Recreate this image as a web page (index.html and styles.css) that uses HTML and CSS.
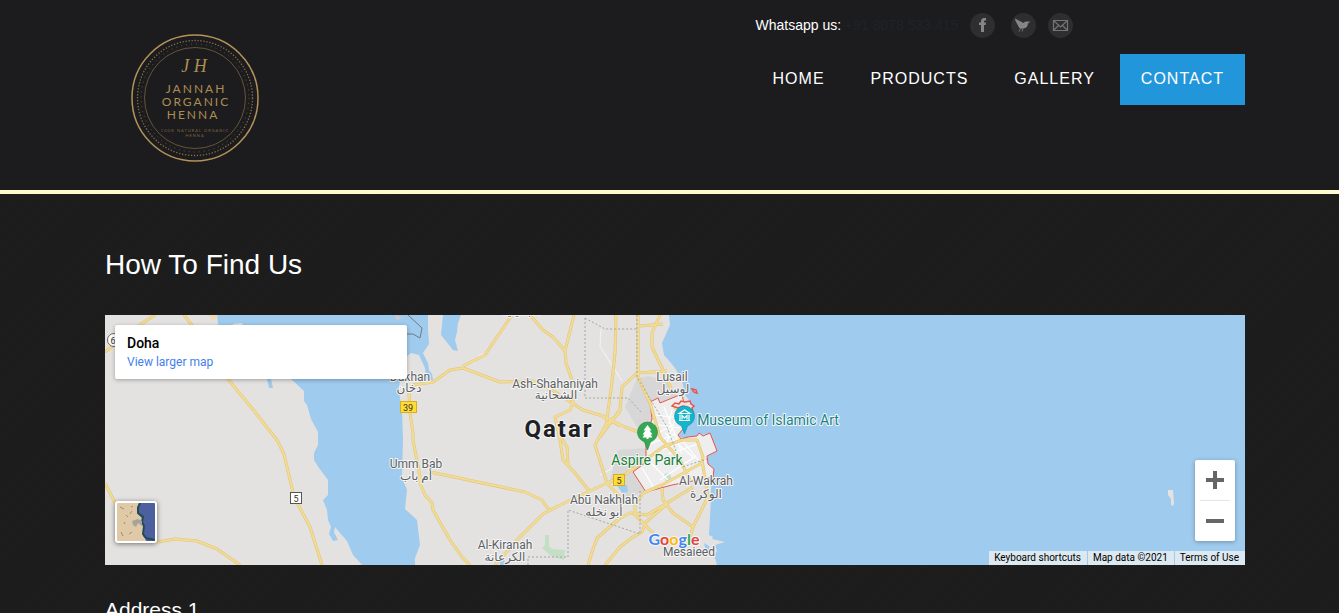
FILE: index.html
```html
<!DOCTYPE html>
<html lang="en">
<head>
<meta charset="utf-8">
<meta name="viewport" content="width=device-width, initial-scale=1">
<title>Contact - Jannah Organic Henna</title>
<link rel="stylesheet" href="styles.css">
</head>
<body>
<header class="site-header">
  <div class="container header-row">
    <a class="logo" href="#" aria-label="Jannah Organic Henna">
      <svg viewBox="0 0 130 130" width="130" height="130">
        <g fill="none" stroke="#a98b54">
          <circle cx="65" cy="65" r="63" stroke-width="1.5" stroke="#b3935a"/>
          <circle cx="65" cy="65" r="57.5" stroke-width="1.3" stroke-dasharray="1.3 1.7" opacity=".75"/>
          <circle cx="65" cy="65" r="54" stroke-width="1" stroke-dasharray="1 4" opacity=".5"/>
          <circle cx="65" cy="65" r="50.5" stroke-width="1" opacity=".5"/>
        </g>
        <g class="logo-text">
          <text class="logo-mono" x="64" y="39">J H</text>
          <text class="logo-name" x="66" y="60">JANNAH</text>
          <text class="logo-name" x="66" y="73">ORGANIC</text>
          <text class="logo-name" x="63" y="86">HENNA</text>
          <text class="logo-tag" x="65" y="99">100% NATURAL ORGANIC</text>
          <text class="logo-tag" x="65" y="104">HENNA</text>
        </g>
      </svg>
    </a>
    <div class="header-side">
      <div class="topline">
        <span>Whatsapp us: <a class="phone" href="#">+91 8078 533 415</a></span>
        <a class="social" href="#" aria-label="Facebook"><svg viewBox="0 0 25 25"><circle cx="12.500" cy="12.500" r="12.500" fill="#2e2e30"/><path d="M11 19v-7H9v-2.500h2V8.500Q11 5 14 5h2v2.500h-1.200Q14 7.500 14 8.500v1h2L15.600 12H14v7z" fill="#858587"/></svg></a>
        <a class="social social-wide" href="#" aria-label="Twitter"><svg viewBox="0 0 25 25"><circle cx="12.500" cy="12.500" r="12.500" fill="#2e2e30"/><path d="M4 5.500l8.500 4.500q1-2 3.500-1.500l3.500.2-2.500 1.800q-.5 4.500-4.500 5l-2.500.2q-2-.2-2.500-2.200L4.500 8z" fill="#858587"/><path d="M9.500 15.500L8 18.500M12 15.500l-1 3" stroke="#707072" fill="none"/></svg></a>
        <a class="social" href="#" aria-label="Email"><svg viewBox="0 0 25 25"><circle cx="12.500" cy="12.500" r="12.500" fill="#2e2e30"/><path d="M5.500 7.500h14v10h-14zL12.500 14l7-6.500M5.500 17.500l5-5M19.500 17.500l-5-5" fill="none" stroke="#747476" stroke-width="1.200"/></svg></a>
      </div>
      <nav class="nav">
        <a href="#">HOME</a>
        <a href="#">PRODUCTS</a>
        <a href="#">GALLERY</a>
        <a class="active" href="#" aria-current="page">CONTACT</a>
      </nav>
    </div>
  </div>
</header>
<main class="page">
  <div class="container">
    <h1>How To Find Us</h1>
    <section class="map" aria-label="Map of Doha">
      <svg class="map-canvas" viewBox="105 315 1140 250" preserveAspectRatio="xMidYMid slice">
        <rect x="105" y="315" width="1140" height="250" fill="#e3e2e0"/>
        <!-- urban areas -->
        <g fill="#d7d7d7">
          <path d="M637 378l12-2 22 8 8 18-26 20-16 5-12-20z"/>
          <path d="M618 450l28-2v15l-13 10 13 19-20 5-16-18z"/>
        </g>
        <!-- sea -->
        <g fill="#9fcbee">
          <path d="M217 315l1 9 18 14 28 30 27 11 13 12v10l3 4 4 14 7 13v13l-4 8v7l5 8 9 12v15l-5 5 4 10 1 10 3 7-2 7 4 7 5-1-4-8 1-5 5 6 7 8 6 14 9 10h53v-7l5-13-3-25-12-11 2-19-5-12 1-38-1-30-3-18 2-25 5-10 5-4 8 2 6 13 1 12h7l-1-6-3-4-1-7-5-10 6-9-1-15V315z"/>
          <path d="M443 315l-2 20 8 10 4 5 5 1-3-11 2-8 1-9 3-8z"/>
          <path d="M267 379h4l2 9-4 0z"/>
          <path d="M669 315l1 10-8 18 2 12 7 8 4 5 7 12 3 15 4 5-4 20-6 7-3 5 4 5 5 2 12-3 10-2 7 18-10 5 1 8 6 5 1 9-1 11v8l-2 37 4 2-1 2 13 3-10 3 2 6-3 4 3 10h529V315z"/>
          <path d="M618 486l9-1 1 7-6 1zM704 543l5 3 1 8-4-2zM500 561l4-1 2 5h-6z"/>
        </g>
        <g fill="#e3e2e0">
          <path d="M233 324l8-1 4 3h-13zM1168 490l5 0 1 13-1 3-2-1v-6l-3-4z"/>
        </g>
        <path d="M208 315h10l-4 6z" fill="#eedcae"/>
        <path d="M395 315l11 4-6-1-3 3z" fill="#d8c9c6"/>
        <path d="M545 535h4v11l3 3 13 1-1 10-13-4-9-8 3-3z" fill="#c3dfc6"/>
        <!-- Doha city limits -->
        <path d="M650 402l8-4 2 5 22-9 2 10 3 5-4 20-5 6 3 4 7-2 9-1 2-3 4 3 7-3 7 18-10 5 1 8 6 5-1 8-41 8-26 7-13-20 13-10v-25l6-18z" fill="#efeeee" stroke="#e8544b"/>
        <path d="M664 474l6-1 2 7-6 3z" fill="#c7dfc9"/>
        <g fill="none" stroke="#fff" stroke-width="1.200">
          <path d="M655 415l25 3M652 424l28 4M655 435l17-10M664 407l10 25 8 22M650 444l25-10M650 454l38-14M668 454l30-10M665 433l28 24M682 440l16 20M642 468l12 20M650 462l18 18M675 420l-8 22M660 480l36-24M672 410l-3 14"/>
          <path d="M440 377l10-8M473 363l7-8 7-2M601 329l-1 17 22 35M600 475l11-6 2-10" stroke="#f1f0f0"/>
        </g>
        <!-- roads -->
        <g class="roads-edge"><use href="#roads"/></g>
        <g class="roads-fill">
          <g id="roads" fill="none" stroke-linejoin="round">
            <path d="M105 352l8-6 28-22 14-9M184 315l8 10 36 54 27 33 22 28 7 14 10 43 16 30 12 38M105 483l10 20M157 542l18-3 22 2 20 8 23 16"/>
            <path d="M409 393l1 20 3 20v7l7 37v6l5 12 7 8 1 7 17 30 12 17 8 8"/>
            <path d="M413 385l20-3 17-12 13-2 37 14 33-1 19 9 20 13 11 7 20 6 17 10M463 366l22-11 8-12 19-28M530 315l13 15 10 7 12 14 9-36M565 351l1 12 6 17 1 23-3 7-15 7 5 23 3 20 12 13 15 19M560 436l7 11 1 18"/>
            <path d="M616 315l-1 38-4 37-5 35-11 20 12 38 13 14M620 412l-14 13M495 565l22-25 26-26 17-9 47-22 13-5 43-31 19-7h15l6 17-1 6-22 12-18 10-19 8-8 12v10l18 18"/>
            <path d="M430 472l95 20 17 8 7 10M588 565l4-13 5-14 23-20 10-5 17 2 20-12 26-16M605 565l15-18 13-10 9-5 4-10 21-18M662 488l1 12 10 13 20 14 15-30-6-37M693 527l-3 10"/>
            <path d="M638 315v62l12 26 10 34 20 23 10 20M660 315l-8 18v14l11 23 10 23M640 326l23-2M600 437l20-27 2-23 15-14 30-2M600 415l25 12 13 5M680 403l-5 5 10 4"/>
          </g>
        </g>
        <g fill="none" stroke="#a5a5a8" stroke-dasharray="2 2">
          <path d="M585 318v80h43l14 15M585 318l20 11h33M528 565v-8h40v-47l72 24v-44M637 315v62l30 50 15 40 25-8"/>
        </g>
        <path d="M408 315l14 13-2 10-7-4h-12" fill="none" stroke="#737980"/>
        <g fill="#efe4e3" stroke="#e8544b" stroke-width="1.500">
          <path d="M692 389l4 1 1 3-3-1z"/>
          <path d="M672 406l3-3 4 1 2-3 4 1 5-1 1 3 3 2-2 2 1 4-4-4-6-2-5 2-3-1z"/>
        </g>
        <!-- road shields -->
        <circle cx="114" cy="340" r="6.500" fill="#fff" stroke="#666"/>
        <rect x="290.500" y="492.500" width="11" height="11" fill="#fff" stroke="#555"/>
        <rect x="400.500" y="401.500" width="16" height="11" fill="#ffdb35" stroke="#d9ae20"/>
        <rect x="613.500" y="474.500" width="11" height="11" fill="#ffdb35" stroke="#d9ae20"/>
        <g class="shield"><text x="113" y="344">6</text><text x="296" y="502">5</text><text x="408" y="411">39</text><text x="619" y="484">5</text></g>
        <!-- place names -->
        <g class="place">
          <text x="410" y="381">Dukhan</text><text x="409" y="392">دخان</text>
          <text x="555" y="388">Ash-Shahaniyah</text><text x="556" y="399">الشحانية</text>
          <text x="416" y="468">Umm Bab</text><text x="416" y="480">أم باب</text>
          <text x="505" y="549">Al-Kiranah</text><text x="505" y="561">الكرعانة</text>
          <text x="604" y="504">Abū Nakhlah</text><text x="604" y="516">أبو نخله</text>
          <text x="672" y="381">Lusail</text><text x="673" y="393">لوسيل</text>
          <text x="706" y="485">Al Wakrah</text><text x="706" y="498">الوكرة</text>
          <text x="689" y="556">Mesaieed</text><text x="689" y="571">مسيعيد</text>
          <text x="521" y="315">الجميلية</text>
        </g>
        <text class="country" x="559" y="437">Qatar</text>
        <text class="poi poi-park" x="647" y="465">Aspire Park</text>
        <text class="poi poi-museum" x="768" y="425">Museum of Islamic Art</text>
        <!-- pins -->
        <path d="M647.500 450l-3-8q-7-3-7-10a10 10 0 0 1 20 0q0 7-7 10z" fill="#34a853" stroke="#238241" stroke-width=".6"/>
        <path d="M647.500 425l4 5.500h-2l3 4h-2l2 3h-4v1.500h-2v-1.500h-4l2-3h-2l3-4h-2z" fill="#fff"/>
        <path d="M684.500 434l-3-8q-7-3-7-10a10 10 0 0 1 20 0q0 7-7 10z" fill="#12b5cb" stroke="#1091a5" stroke-width=".6"/>
        <path d="M679 413.500l5.500-3.500 5.500 3.500zM680 414.500v6M689 414.500v6M679 420.500h11M682 419.500v-4l2.500 2.500 2.500-2.500v4" fill="none" stroke="#fff" stroke-width="1.200"/>
        <text class="google" x="674" y="545"><tspan fill="#4285f4">G</tspan><tspan fill="#ea4335">o</tspan><tspan fill="#fbbc05">o</tspan><tspan fill="#4285f4">g</tspan><tspan fill="#34a853">l</tspan><tspan fill="#ea4335">e</tspan></text>
      </svg>
      <div class="place-card">
        <strong>Doha</strong>
        <a href="#">View larger map</a>
      </div>
      <button class="satellite" type="button" aria-label="Show satellite imagery">
        <svg viewBox="0 0 38 38"><rect width="38" height="38" fill="#dfc9a6"/><path d="M22 0l-2 5 1 6 4 4-1 5 3 3-1 10 2 2 1 3h9V0z" fill="#4c609f"/><path d="M23 0l-2 5 0 5 5 4-1 5 2 4-1 8 3 4 9 2" fill="none" stroke="#244a58" stroke-width="2"/><path d="M15 18l6-2 4 2 0 5-4-3-2 4-3-2z" fill="#a8a39a"/><path d="M4 29l2 4M9 12l2 2M15 8l-2 3M7 19l1 2M3 4l4 2M12 31l3-2M14 4l2-1" stroke="#a58c6d" fill="none"/></svg>
      </button>
      <div class="zoom">
        <button type="button" aria-label="Zoom in"><svg viewBox="0 0 18 18"><path d="M7 0h4v7h7v4h-7v7H7v-7H0V7h7z"/></svg></button>
        <button type="button" aria-label="Zoom out"><svg viewBox="0 0 18 18"><path d="M0 7h18v4H0z"/></svg></button>
      </div>
      <div class="attribution">
        <button type="button">Keyboard shortcuts</button>
        <span>Map data ©2021</span>
        <a href="#">Terms of Use</a>
      </div>
    </section>
    <h2>Address 1</h2>
  </div>
</main>
</body>
</html>
```
FILE: styles.css
```css
* { box-sizing: border-box; }
html { background: #1c1c1c; }
body {
  margin: 0;
  height: 100vh;
  overflow: hidden;
  color: #fff;
  font: 14px/20px "Liberation Sans", Arial, sans-serif;
  background: repeating-linear-gradient(135deg, #1c1c1c 0 2px, #1e1e1e 2px 3px);
}
a { color: inherit; text-decoration: none; }
button { font: inherit; color: inherit; border: 0; padding: 0; cursor: pointer; }
svg { display: block; }

.site-header { background: #1c1c1e; border-bottom: 4px solid #fffacd; padding-left: 11px; }
.page { padding-left: 11px; }
.container { max-width: 1140px; margin: 0 auto; }

.header-row { display: flex; justify-content: space-between; align-items: flex-start; min-height: 190px; }
.logo { margin: 33px 0 0 25px; }
.logo-text { fill: #ad8d53; text-anchor: middle; font-family: Lato, sans-serif; }
.logo-mono { font: italic 18px "Liberation Serif", serif; }
.logo-name { font-size: 12px; letter-spacing: 2px; }
.logo-tag { font-size: 4px; letter-spacing: 1px; opacity: .65; }

.header-side { padding-top: 12px; }
.topline { display: flex; align-items: center; gap: 12px; height: 26px; padding-left: 4px; }
.phone { color: #1e232b; }
.social svg { width: 25px; height: 25px; }
.social-wide { padding-left: 4px; }
.nav { display: flex; gap: 4px; margin-top: 16px; }
.nav a { padding: 15px 21px 16px; font-size: 16px; letter-spacing: 1px; }
.nav .active { background: #2196db; }

h1 { margin: 0; padding: 50px 0 30px; font-weight: 400; font-size: 28px; line-height: 41px; }
h2 { margin: 0; padding: 30px 0; font-weight: 400; font-size: 21px; line-height: 30px; }

.map { position: relative; height: 250px; overflow: hidden; font-family: Roboto, sans-serif; color: #000; }
.map-canvas { width: 100%; height: 100%; }
.map-canvas text { text-anchor: middle; paint-order: stroke; stroke: #f5f5f5; stroke-width: 2px; stroke-linejoin: round; }
.roads-edge { stroke: #e4c373; stroke-width: 3px; }
.roads-fill { stroke: #f0dc94; stroke-width: 2px; }
.place { font: 12px Roboto, "DejaVu Sans", sans-serif; fill: #5c5f64; }
.map-canvas .shield text { font: 9px Roboto, sans-serif; fill: #333; stroke: none; }
.country { font: 700 24px Roboto, sans-serif; letter-spacing: 2px; fill: #202124; }
.poi { font: 14px Roboto, sans-serif; }
.poi-park { fill: #188038; }
.poi-museum { fill: #12858f; }
.google { font: 700 16px Lato, sans-serif; }

.place-card {
  position: absolute; left: 10px; top: 10px; width: 292px; padding: 9px 12px 8px;
  display: flex; flex-direction: column; align-items: flex-start;
  background: #fff; border-radius: 2px; box-shadow: 0 1px 4px rgba(0, 0, 0, .3);
}
.place-card strong { font-size: 14px; font-weight: 500; line-height: 19px; }
.place-card a { font-size: 12px; line-height: 18px; color: #427fed; }

.satellite {
  position: absolute; left: 10px; bottom: 22px; width: 42px; height: 42px;
  border: 2px solid #fff; border-radius: 3px; overflow: hidden; box-shadow: 0 1px 5px rgba(0, 0, 0, .5);
}
.zoom {
  position: absolute; right: 10px; bottom: 24px; width: 40px;
  background: #fff; border-radius: 2px; box-shadow: 0 1px 4px rgba(0, 0, 0, .3);
}
.zoom button { display: flex; align-items: center; justify-content: center; width: 30px; height: 40px; margin: 0 5px; background: none; }
.zoom button + button { height: 41px; border-top: 1px solid #e6e6e6; }
.zoom svg { width: 18px; height: 18px; fill: #666; }

.attribution { position: absolute; right: 0; bottom: 0; display: flex; gap: 1px; font-size: 10px; line-height: 14px; }
.attribution > * { padding: 0 6px 0 5px; background: #dce9f1; }
```
